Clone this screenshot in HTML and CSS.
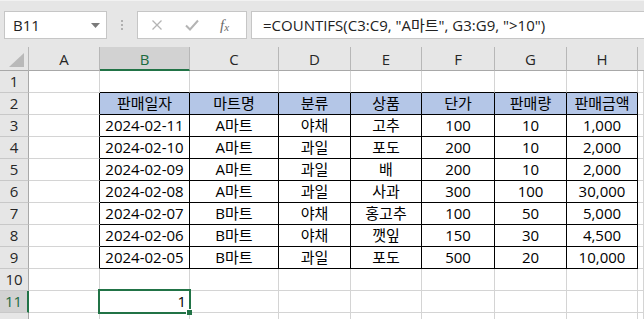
FILE: index.html
```html
<!DOCTYPE html>
<html lang="ko">
<head>
<meta charset="utf-8">
<title>Excel COUNTIFS</title>
<link rel="stylesheet" href="styles.css">
</head>
<body>
<div class="app">
  <div class="toolbar">
    <div class="namebox">
      <span class="name">B11</span>
      <svg class="dd" width="9" height="5" viewBox="0 0 9 5"><path d="M0 0h9L4.5 5z" fill="#7a7a7a"/></svg>
    </div>
    <div class="grip"><i></i><i></i><i></i></div>
    <div class="fxbox">
      <svg class="ico" width="12" height="12" viewBox="0 0 12 12"><path d="M1.5 1.5l9 9M10.5 1.5l-9 9" stroke="#b4b4b4" stroke-width="1.3" fill="none"/></svg>
      <svg class="ico" width="14" height="12" viewBox="0 0 14 12"><path d="M1 6.5l4 4L13 1.5" stroke="#b4b4b4" stroke-width="2" fill="none"/></svg>
      <span class="fx">f<sub>x</sub></span>
    </div>
    <div class="formula">=COUNTIFS(C3:C9, "A마트", G3:G9, "&gt;10")</div>
  </div>

  <div class="sheet">
    <!-- column headers -->
    <div class="ch corner"><svg width="15" height="14" viewBox="0 0 15 14"><path d="M15 0V14H0z" fill="#b9b9b9"/></svg></div>
    <div class="ch">A</div>
    <div class="ch sel">B</div>
    <div class="ch">C</div>
    <div class="ch">D</div>
    <div class="ch">E</div>
    <div class="ch">F</div>
    <div class="ch">G</div>
    <div class="ch">H</div>
    <div class="ch last"></div>

    <!-- row 1 -->
    <div class="rh">1</div>
    <div class="c"></div><div class="c tb"></div><div class="c tb"></div><div class="c tb"></div><div class="c tb"></div><div class="c tb"></div><div class="c tb"></div><div class="c tb"></div><div class="c"></div>

    <!-- row 2 -->
    <div class="rh">2</div>
    <div class="c lb"></div>
    <div class="c d h">판매일자</div><div class="c d h">마트명</div><div class="c d h">분류</div><div class="c d h">상품</div><div class="c d h">단가</div><div class="c d h">판매량</div><div class="c d h">판매금액</div>
    <div class="c"></div>

    <!-- row 3 -->
    <div class="rh">3</div>
    <div class="c lb"></div>
    <div class="c d">2024-02-11</div><div class="c d">A마트</div><div class="c d">야채</div><div class="c d">고추</div><div class="c d">100</div><div class="c d">10</div><div class="c d">1,000</div>
    <div class="c"></div>

    <!-- row 4 -->
    <div class="rh">4</div>
    <div class="c lb"></div>
    <div class="c d">2024-02-10</div><div class="c d">A마트</div><div class="c d">과일</div><div class="c d">포도</div><div class="c d">200</div><div class="c d">10</div><div class="c d">2,000</div>
    <div class="c"></div>

    <!-- row 5 -->
    <div class="rh">5</div>
    <div class="c lb"></div>
    <div class="c d">2024-02-09</div><div class="c d">A마트</div><div class="c d">과일</div><div class="c d">배</div><div class="c d">200</div><div class="c d">10</div><div class="c d">2,000</div>
    <div class="c"></div>

    <!-- row 6 -->
    <div class="rh">6</div>
    <div class="c lb"></div>
    <div class="c d">2024-02-08</div><div class="c d">A마트</div><div class="c d">과일</div><div class="c d">사과</div><div class="c d">300</div><div class="c d">100</div><div class="c d">30,000</div>
    <div class="c"></div>

    <!-- row 7 -->
    <div class="rh">7</div>
    <div class="c lb"></div>
    <div class="c d">2024-02-07</div><div class="c d">B마트</div><div class="c d">야채</div><div class="c d">홍고추</div><div class="c d">100</div><div class="c d">50</div><div class="c d">5,000</div>
    <div class="c"></div>

    <!-- row 8 -->
    <div class="rh">8</div>
    <div class="c lb"></div>
    <div class="c d">2024-02-06</div><div class="c d">B마트</div><div class="c d">야채</div><div class="c d">깻잎</div><div class="c d">150</div><div class="c d">30</div><div class="c d">4,500</div>
    <div class="c"></div>

    <!-- row 9 -->
    <div class="rh">9</div>
    <div class="c lb"></div>
    <div class="c d">2024-02-05</div><div class="c d">B마트</div><div class="c d">과일</div><div class="c d">포도</div><div class="c d">500</div><div class="c d">20</div><div class="c d">10,000</div>
    <div class="c"></div>

    <!-- row 10 -->
    <div class="rh">10</div>
    <div class="c"></div><div class="c"></div><div class="c"></div><div class="c"></div><div class="c"></div><div class="c"></div><div class="c"></div><div class="c"></div><div class="c"></div>

    <!-- row 11 -->
    <div class="rh sel">11</div>
    <div class="c"></div>
    <div class="c num active">1<span class="selbox"></span><span class="handle"></span></div>
    <div class="c"></div><div class="c"></div><div class="c"></div><div class="c"></div><div class="c"></div><div class="c"></div><div class="c"></div>

    <!-- row 12 -->
    <div class="rh">12</div>
    <div class="c"></div><div class="c"></div><div class="c"></div><div class="c"></div><div class="c"></div><div class="c"></div><div class="c"></div><div class="c"></div><div class="c"></div>
  </div>
</div>
</body>
</html>
```

FILE: styles.css
```css
* { box-sizing: border-box; }
html, body { margin: 0; padding: 0; background: #ffffff; overflow: hidden; }
body { width: 644px; height: 319px; }

.app { width: 644px; height: 319px; overflow: hidden; font-family: "Open Sans", "Noto Sans CJK KR", sans-serif; }

.toolbar {
  height: 47px;
  background: #e6e6e6;
  border-top: 1px solid #f2f2f2;
  display: flex;
  align-items: flex-start;
  padding: 10px 0 0 4px;
}
.namebox {
  width: 103px;
  height: 28px;
  background: #ffffff;
  border: 1px solid #c6c6c6;
  display: flex;
  align-items: center;
  justify-content: space-between;
  padding: 0 6px 0 8px;
  font-size: 15px;
  color: #222;
}
.name { line-height: 26px; }
.dd { margin-top: 1px; }
.grip {
  width: 30px;
  height: 28px;
  display: flex;
  flex-direction: column;
  align-items: center;
  justify-content: center;
  gap: 2px;
}
.grip i { display: block; width: 2px; height: 2px; background: #b0b0b0; }
.fxbox {
  width: 110px;
  height: 28px;
  background: #ffffff;
  border: 1px solid #c6c6c6;
  display: flex;
  align-items: center;
  padding: 0 0 0 13px;
  gap: 24px;
}
.fxbox .ico:nth-child(2) { margin-left: -2px; }
.fx {
  font-family: "Liberation Serif", serif;
  font-style: italic;
  font-size: 15px;
  color: #6a6a6a;
  margin-left: -3px;
  line-height: 1;
}
.fx sub { font-size: 11px; vertical-align: -1px; }
.formula {
  flex: 1;
  margin-left: 4px;
  height: 28px;
  background: #ffffff;
  border: 1px solid #c6c6c6;
  border-right: none;
  font-size: 15px;
  line-height: 26px;
  padding-left: 11px;
  color: #222;
  white-space: nowrap;
}

.sheet {
  display: grid;
  grid-template-columns: 29px 71px 90px 89px 72px 71px 73px 72px 71px 1fr;
  grid-template-rows: 24px repeat(12, 22px);
  font-size: 15px;
}
.ch {
  background: #e6e6e6;
  border-right: 1px solid #b7b7b7;
  border-bottom: 1px solid #a8a8a8;
  text-align: center;
  line-height: 23px;
  padding-top: 1px;
  color: #262626;
  font-size: 15px;
}
.ch.last { border-right: none; }
.ch.corner { position: relative; border-right-color: #b7b7b7; }
.ch.corner svg { position: absolute; right: 4px; bottom: 3px; }
.ch.sel { background: #d2d2d2; color: #1c6b3f; border-bottom: 2px solid #217346; line-height: 22px; }

.rh {
  background: #e6e6e6;
  border-right: 1px solid #a8a8a8;
  border-bottom: 1px solid #c8c8c8;
  text-align: center;
  line-height: 21px;
  color: #262626;
  font-size: 15px;
}
.rh.sel { background: #d2d2d2; color: #1c6b3f; border-right: 2px solid #217346; }

.c {
  border-right: 1px solid #d4d4d4;
  border-bottom: 1px solid #d4d4d4;
  line-height: 21px;
  color: #000;
  white-space: nowrap;
}
.c.tb { border-bottom-color: #000; }
.c.lb { border-right-color: #000; }
.c.d { border-right-color: #000; border-bottom-color: #000; text-align: center; }
.c.h { background: #b4c6e7; }
.c.num { text-align: right; padding-right: 3px; }
.c.active { position: relative; }
.selbox {
  position: absolute;
  left: -2px;
  top: -2px;
  width: 93px;
  height: 25px;
  border: 2px solid #217346;
}
.handle {
  position: absolute;
  left: 86px;
  top: 18px;
  width: 6px;
  height: 6px;
  background: #217346;
  border: 1px solid #ffffff;
  border-right: none;
  border-bottom: none;
}
```
